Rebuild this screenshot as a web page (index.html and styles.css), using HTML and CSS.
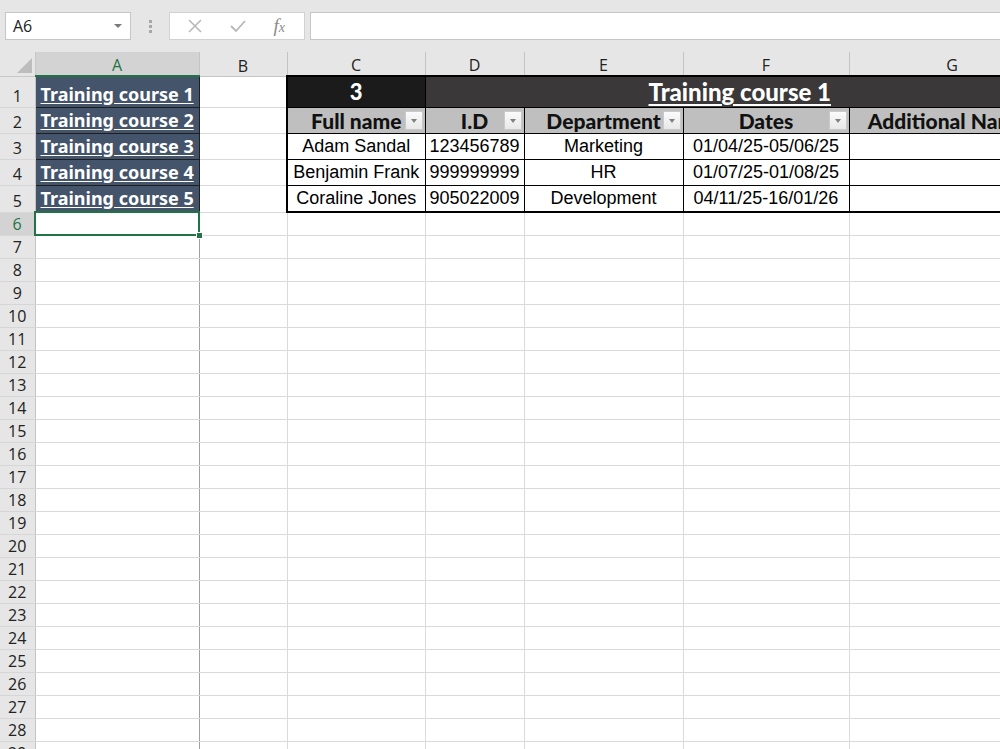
FILE: index.html
```html
<!DOCTYPE html>
<html>
<head>
<meta charset="utf-8">
<title>Training courses</title>
<link rel="stylesheet" href="styles.css">
</head>
<body>

<div class="formula-bar">
  <div class="name-box">
    <span>A6</span>
    <span class="caret"></span>
  </div>
  <div class="grip"><i></i><i></i><i></i></div>
  <div class="fx-buttons">
    <svg width="16" height="16" viewBox="0 0 16 16"><path d="M2 2 L14 14 M14 2 L2 14" stroke="#b8b8b8" stroke-width="1.6" fill="none"/></svg>
    <svg width="18" height="16" viewBox="0 0 18 16"><path d="M2 8 L7 13 L16 3" stroke="#b8b8b8" stroke-width="1.8" fill="none"/></svg>
    <span class="fx">f<small>x</small></span>
  </div>
  <div class="formula-input"></div>
</div>

<table class="sheet">
  <colgroup>
    <col class="w-hdr"><col class="w-a"><col class="w-b"><col class="w-c">
    <col class="w-d"><col class="w-e"><col class="w-f"><col class="w-g">
  </colgroup>
  <thead>
    <tr>
      <th class="corner"><svg width="35" height="22" viewBox="0 0 35 22"><polygon points="32,5 32,20 17,20" fill="#bdbdbd"/></svg></th>
      <th class="col-hdr is-sel">A</th>
      <th class="col-hdr">B</th>
      <th class="col-hdr">C</th>
      <th class="col-hdr">D</th>
      <th class="col-hdr">E</th>
      <th class="col-hdr">F</th>
      <th class="col-hdr">G</th>
    </tr>
  </thead>
  <tbody>
    <tr class="row-1">
      <th class="rh">1</th>
      <td class="link"><a href="#">Training course 1</a></td>
      <td></td>
      <td class="count t-left t-top">3</td>
      <td class="title t-top t-right" colspan="4"><span>Training course 1</span></td>
    </tr>
    <tr class="row-n">
      <th class="rh">2</th>
      <td class="link"><a href="#">Training course 2</a></td>
      <td></td>
      <td class="head t-left">Full name<span class="filter"></span></td>
      <td class="head">I.D<span class="filter"></span></td>
      <td class="head">Department<span class="filter"></span></td>
      <td class="head">Dates<span class="filter"></span></td>
      <td class="head t-right">Additional Names</td>
    </tr>
    <tr class="row-n">
      <th class="rh">3</th>
      <td class="link"><a href="#">Training course 3</a></td>
      <td></td>
      <td class="data t-left">Adam Sandal</td>
      <td class="data">123456789</td>
      <td class="data">Marketing</td>
      <td class="data">01/04/25-05/06/25</td>
      <td class="data t-right"></td>
    </tr>
    <tr class="row-n">
      <th class="rh">4</th>
      <td class="link"><a href="#">Training course 4</a></td>
      <td></td>
      <td class="data t-left">Benjamin Frank</td>
      <td class="data">999999999</td>
      <td class="data">HR</td>
      <td class="data">01/07/25-01/08/25</td>
      <td class="data t-right"></td>
    </tr>
    <tr class="row-n row-last">
      <th class="rh">5</th>
      <td class="link"><a href="#">Training course 5</a></td>
      <td></td>
      <td class="data t-left t-bottom">Coraline Jones</td>
      <td class="data t-bottom">905022009</td>
      <td class="data t-bottom">Development</td>
      <td class="data t-bottom">04/11/25-16/01/26</td>
      <td class="data t-right t-bottom"></td>
    </tr>
    <tr><th class="rh is-sel">6</th><td class="a-col active"></td><td></td><td></td><td></td><td></td><td></td><td></td></tr>
    <tr><th class="rh">7</th><td class="a-col"></td><td></td><td></td><td></td><td></td><td></td><td></td></tr>
    <tr><th class="rh">8</th><td class="a-col"></td><td></td><td></td><td></td><td></td><td></td><td></td></tr>
    <tr><th class="rh">9</th><td class="a-col"></td><td></td><td></td><td></td><td></td><td></td><td></td></tr>
    <tr><th class="rh">10</th><td class="a-col"></td><td></td><td></td><td></td><td></td><td></td><td></td></tr>
    <tr><th class="rh">11</th><td class="a-col"></td><td></td><td></td><td></td><td></td><td></td><td></td></tr>
    <tr><th class="rh">12</th><td class="a-col"></td><td></td><td></td><td></td><td></td><td></td><td></td></tr>
    <tr><th class="rh">13</th><td class="a-col"></td><td></td><td></td><td></td><td></td><td></td><td></td></tr>
    <tr><th class="rh">14</th><td class="a-col"></td><td></td><td></td><td></td><td></td><td></td><td></td></tr>
    <tr><th class="rh">15</th><td class="a-col"></td><td></td><td></td><td></td><td></td><td></td><td></td></tr>
    <tr><th class="rh">16</th><td class="a-col"></td><td></td><td></td><td></td><td></td><td></td><td></td></tr>
    <tr><th class="rh">17</th><td class="a-col"></td><td></td><td></td><td></td><td></td><td></td><td></td></tr>
    <tr><th class="rh">18</th><td class="a-col"></td><td></td><td></td><td></td><td></td><td></td><td></td></tr>
    <tr><th class="rh">19</th><td class="a-col"></td><td></td><td></td><td></td><td></td><td></td><td></td></tr>
    <tr><th class="rh">20</th><td class="a-col"></td><td></td><td></td><td></td><td></td><td></td><td></td></tr>
    <tr><th class="rh">21</th><td class="a-col"></td><td></td><td></td><td></td><td></td><td></td><td></td></tr>
    <tr><th class="rh">22</th><td class="a-col"></td><td></td><td></td><td></td><td></td><td></td><td></td></tr>
    <tr><th class="rh">23</th><td class="a-col"></td><td></td><td></td><td></td><td></td><td></td><td></td></tr>
    <tr><th class="rh">24</th><td class="a-col"></td><td></td><td></td><td></td><td></td><td></td><td></td></tr>
    <tr><th class="rh">25</th><td class="a-col"></td><td></td><td></td><td></td><td></td><td></td><td></td></tr>
    <tr><th class="rh">26</th><td class="a-col"></td><td></td><td></td><td></td><td></td><td></td><td></td></tr>
    <tr><th class="rh">27</th><td class="a-col"></td><td></td><td></td><td></td><td></td><td></td><td></td></tr>
    <tr><th class="rh">28</th><td class="a-col"></td><td></td><td></td><td></td><td></td><td></td><td></td></tr>
    <tr><th class="rh">29</th><td class="a-col"></td><td></td><td></td><td></td><td></td><td></td><td></td></tr>
  </tbody>
</table>

</body>
</html>
```

FILE: styles.css
```css
body {
  margin: 0;
  width: 1000px;
  height: 749px;
  overflow: hidden;
  background: #fff;
  font-family: "Liberation Sans", Arial, sans-serif;
}

/* ---- formula bar ---- */
.formula-bar {
  height: 52px;
  box-sizing: border-box;
  padding-top: 12px;
  background: #e6e6e6;
  display: flex;
  align-items: flex-start;
}

.name-box {
  margin-left: 5px;
  width: 126px;
  height: 28px;
  box-sizing: border-box;
  padding: 0 8px 0 7px;
  background: #fff;
  border: 1px solid #c6c6c6;
  display: flex;
  align-items: center;
  justify-content: space-between;
  font-family: "Open Sans", sans-serif;
  font-size: 16px;
  color: #222;
}

.caret {
  width: 0;
  height: 0;
  border-left: 4px solid transparent;
  border-right: 4px solid transparent;
  border-top: 4px solid #7a7a7a;
}

.grip {
  width: 38px;
  height: 28px;
  display: flex;
  flex-direction: column;
  align-items: center;
  justify-content: center;
  gap: 2px;
}

.grip i {
  width: 3px;
  height: 3px;
  background: #a8a8a8;
}

.fx-buttons {
  width: 136px;
  height: 28px;
  box-sizing: border-box;
  background: #fff;
  border: 1px solid #d2d2d2;
  display: flex;
  align-items: center;
  justify-content: space-around;
  padding: 0 6px 0 4px;
}

.fx {
  font-family: "Liberation Serif", serif;
  font-style: italic;
  font-size: 19px;
  color: #8a8a8a;
}

.fx small {
  font-size: 14px;
}

.formula-input {
  margin-left: 5px;
  flex: 1;
  height: 28px;
  box-sizing: border-box;
  background: #fff;
  border: 1px solid #c6c6c6;
  border-right: none;
}

/* ---- grid ---- */
.sheet {
  border-collapse: collapse;
  table-layout: fixed;
  width: 1055px;
}

.w-hdr { width: 35px; }
.w-a { width: 164px; }
.w-b { width: 88px; }
.w-c { width: 138px; }
.w-d { width: 99px; }
.w-e { width: 159px; }
.w-f { width: 166px; }
.w-g { width: 206px; }

.sheet td {
  height: 23px;
  padding: 0 4px;
  border: 1px solid #dadada;
  white-space: nowrap;
  box-sizing: border-box;
}

.sheet tr.row-1 td,
.sheet tr.row-1 th { height: 30px; }

.sheet tr.row-n td,
.sheet tr.row-n th { height: 25px; }

.sheet tr.row-last td,
.sheet tr.row-last th { height: 26px; }

.corner {
  height: 23px;
  padding: 0;
  background: #e6e6e6;
  border-right: 1px solid #c8c8c8;
  border-bottom: 1px solid #c8c8c8;
}

.corner svg { display: block; }

.col-hdr {
  height: 23px;
  padding: 0;
  background: #e6e6e6;
  border-right: 1px solid #c4c4c4;
  border-bottom: 1px solid #c4c4c4;
  font-family: "Open Sans", sans-serif;
  font-weight: normal;
  font-size: 16px;
  line-height: 20px;
  color: #222;
  vertical-align: bottom;
}

.col-hdr.is-sel {
  background: #d3d3d3;
  color: #217346;
  border-bottom: 2px solid #217346;
}

.rh {
  padding: 0;
  background: #e6e6e6;
  border-right: 1px solid #c4c4c4;
  border-bottom: 1px solid #d6d6d6;
  font-family: "Open Sans", sans-serif;
  font-weight: normal;
  font-size: 16px;
  line-height: 21px;
  color: #222;
  text-align: center;
  vertical-align: bottom;
}

.rh.is-sel {
  background: #d3d3d3;
  color: #217346;
}

/* ---- course links in column A ---- */
.sheet td.link {
  padding: 0 0 1px 5px;
  background: #44546a;
  border: 1px solid #1e1e1e;
  vertical-align: bottom;
  font-family: "Noto Sans", sans-serif;
  font-weight: bold;
  font-size: 18px;
  line-height: 23px;
  overflow: hidden;
}

.link a {
  color: #fff;
  text-decoration: underline;
  text-underline-offset: 2px;
}

.sheet td.a-col { border-right: 1px solid #a0a0a0; }

.sheet td.active {
  position: relative;
  border: 2px solid #217346;
}

.active::after {
  content: "";
  position: absolute;
  right: -5px;
  bottom: -5px;
  width: 5px;
  height: 5px;
  background: #217346;
  border: 1px solid #fff;
}

/* ---- training table ---- */
.sheet td.count,
.sheet td.title {
  border: 1px solid #000;
  color: #fff;
  text-align: center;
  font-family: Lato, sans-serif;
  font-weight: 900;
  font-size: 22px;
}

.sheet td.count { background: #1b1b1b; }

.sheet td.title {
  background: #3a3838;
  overflow: hidden;
  font-size: 24px;
}

.title span {
  text-decoration: underline;
  text-underline-offset: 3px;
  text-decoration-thickness: 2px;
}

.sheet td.head {
  position: relative;
  background: #bfbfbf;
  border: 1px solid #000;
  text-align: center;
  font-family: Lato, sans-serif;
  font-weight: 900;
  font-size: 21px;
  color: #111;
  overflow: hidden;
}

.filter {
  position: absolute;
  right: 2px;
  top: 3px;
  width: 18px;
  height: 19px;
  box-sizing: border-box;
  background: linear-gradient(#fbfbfb, #e8e8e8);
  border: 1px solid #cacaca;
}

.filter::after {
  content: "";
  position: absolute;
  left: 5px;
  top: 7px;
  border-left: 3.5px solid transparent;
  border-right: 3.5px solid transparent;
  border-top: 4px solid #808080;
}

.sheet td.data {
  border: 1px solid #000;
  text-align: center;
  font-size: 18px;
  color: #000;
}

.sheet td.t-left { border-left: 2px solid #000; }
.sheet td.t-right { border-right: 2px solid #000; }
.sheet td.t-top { border-top: 2px solid #000; }
.sheet td.t-bottom { border-bottom: 2px solid #000; }
```
